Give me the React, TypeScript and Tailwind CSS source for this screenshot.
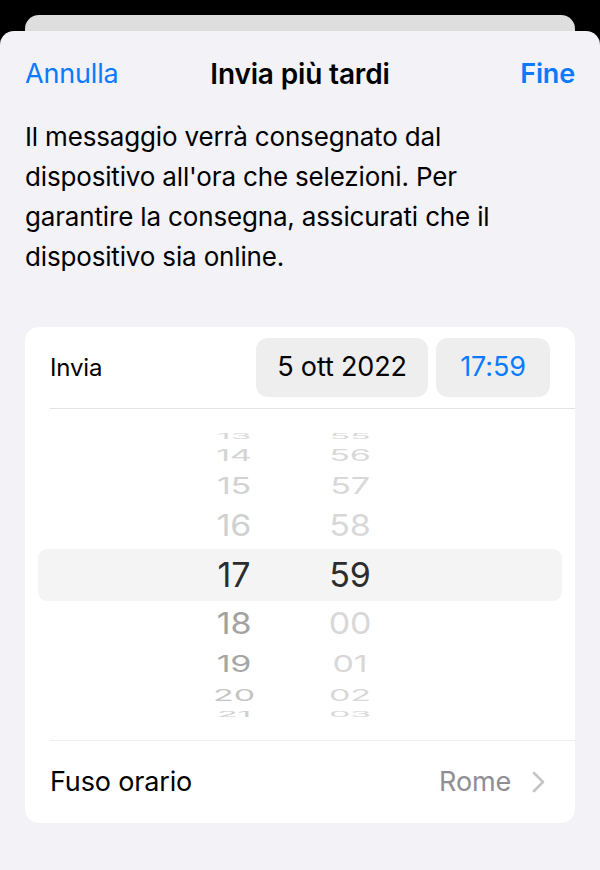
const hours = [
  { v: '13', h: 10, s: 0.22, c: '#d9d9d9' },
  { v: '14', h: 28, s: 0.48, c: '#d4d4d4' },
  { v: '15', h: 34, s: 0.68, c: '#d2d2d2' },
  { v: '16', h: 46, s: 0.87, c: '#d0d0d0' },
  { v: '17', h: 52, s: 1, c: '#2c2c2e' },
  { v: '18', h: 46, s: 0.87, c: '#a2a2a2' },
  { v: '19', h: 34, s: 0.68, c: '#a6a6a6' },
  { v: '20', h: 28, s: 0.48, c: '#c4c4c4' },
  { v: '21', h: 10, s: 0.22, c: '#d0d0d0' },
]

const minutes = ['55', '56', '57', '58', '59', '00', '01', '02', '03']

function Chevron() {
  return (
    <svg width="13" height="22" viewBox="0 0 13 22" fill="none">
      <path d="M2 2l9 9-9 9" stroke="#c4c4c7" strokeWidth="2.6" strokeLinecap="round" strokeLinejoin="round" />
    </svg>
  )
}

function Wheel() {
  return (
    <div className="relative px-[13px] pt-[22px] pb-[21px]">
      <div className="relative flex">
        <div className="absolute left-0 right-0 top-[118px] h-[52px] rounded-[9px] bg-[#f4f4f4]" />
        <div className="relative flex w-full justify-center gap-[44px] pr-[16px]">
          <div className="flex w-[72px] flex-col items-center">
            {hours.map((r) => (
              <div
                key={r.v}
                className="flex w-full items-center justify-center overflow-hidden text-[34px] leading-none"
                style={{ height: r.h }}
              >
                <span style={{ transform: `scaleY(${r.s})`, color: r.c }}>{r.v}</span>
              </div>
            ))}
          </div>
          <div className="flex w-[72px] flex-col items-center">
            {hours.map((r, i) => (
              <div
                key={minutes[i]}
                className="flex w-full items-center justify-center overflow-hidden text-[34px] leading-none"
                style={{ height: r.h }}
              >
                <span style={{ transform: `scaleY(${r.s})`, color: i === 4 ? '#2c2c2e' : '#d8d8d8' }}>
                  {minutes[i]}
                </span>
              </div>
            ))}
          </div>
        </div>
      </div>
    </div>
  )
}

export default function App() {
  return (
    <div className="h-[870px] w-[600px] overflow-hidden bg-black font-['Inter',sans-serif] tracking-[-0.01em]">
      <div className="mx-[25px] mt-[15px] h-[40px] rounded-t-[14px] bg-[#dededf]" />
      <div className="-mt-[24px] h-[839px] rounded-t-[14px] bg-[#f2f2f7] px-[25px]">
        <div className="grid h-[84px] grid-cols-[1fr_auto_1fr] items-center pt-[2px] text-[27px]">
          <span className="text-[#0a7aff]">Annulla</span>
          <span className="text-[28px] font-semibold text-black">Invia più tardi</span>
          <span className="text-right font-semibold text-[#0a7aff]">Fine</span>
        </div>
        <p className="w-[480px] pt-[2px] text-[26px] leading-[40px] text-black">
          Il messaggio verrà consegnato dal dispositivo all'ora che selezioni. Per garantire la consegna, assicurati che il dispositivo sia online.
        </p>
        <div className="mt-[50px] rounded-[14px] bg-white">
          <div className="ml-[25px] flex h-[82px] items-center border-b border-[#e3e3e6] pr-[25px]">
            <span className="flex-1 text-[24px] text-black">Invia</span>
            <div className="flex h-[59px] w-[172px] items-center justify-center rounded-[12px] bg-[#eeeeef] text-[27px] text-black">
              5 ott 2022
            </div>
            <div className="ml-[8px] flex h-[59px] w-[114px] items-center justify-center rounded-[12px] bg-[#eeeeef] text-[27px] text-[#0a7aff]">
              17:59
            </div>
          </div>
          <Wheel />
          <div className="ml-[25px] flex h-[83px] items-center border-t border-[#efeff1] pr-[30px]">
            <span className="flex-1 text-[27px] text-black">Fuso orario</span>
            <span className="mr-[21px] text-[27px] text-[#8e8e93]">Rome</span>
            <Chevron />
          </div>
        </div>
      </div>
    </div>
  )
}
